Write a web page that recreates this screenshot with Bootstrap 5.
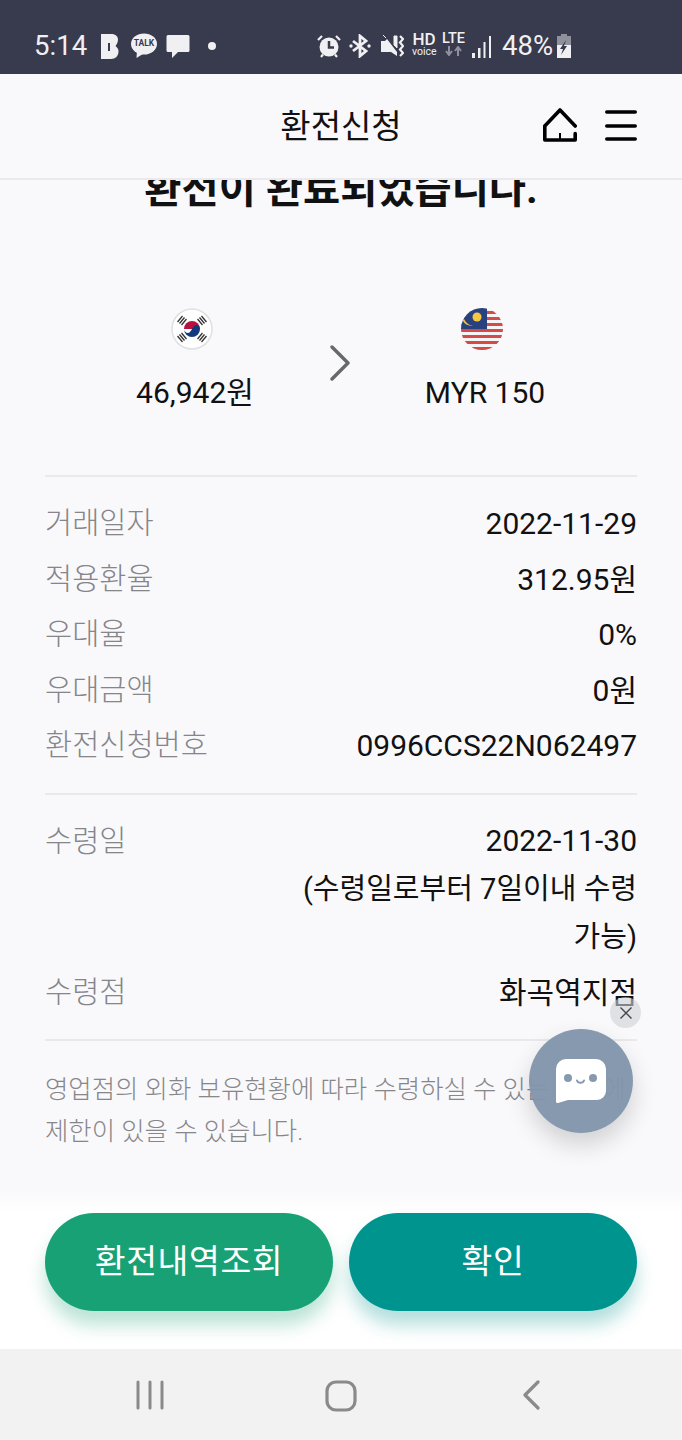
<!DOCTYPE html>
<html lang="ko">
<head>
  <meta charset="UTF-8" />
  <meta name="viewport" content="width=device-width, initial-scale=1.0"/>
  <title>환전신청</title>
  <link href="https://cdn.jsdelivr.net/npm/bootstrap@5.3.3/dist/css/bootstrap.min.css" rel="stylesheet">
  <style>
    body {
      background-color: #f9f9fc;
      color: #111;
      font-family: Roboto, 'Noto Sans CJK KR', sans-serif;
    }

    .phone {
      width: 682px;
      height: 1440px;
      overflow: hidden;
      position: relative;
    }

    .status-bar {
      height: 74px;
      background-color: #383a4e;
      color: #f0f0f2;
      padding: 16px 0 0 34px;
      flex-shrink: 0;
    }

    .status-row { height: 60px; }
    .status-right { margin-left: 101px; }
    .status-time { font-size: 27.5px; line-height: 60px; width: 60px; height: 60px; letter-spacing: 0.1px; }
    .status-pct { font-size: 27.5px; line-height: 60px; margin-left: 10px; }
    .status-bar svg { display: block; flex-shrink: 0; }
    .b-ico { margin-left: 6px; }
    .talk-wrap { width: 26px; height: 26px; margin-left: 11px; }
    .talk-text { left: 0; right: 0; top: 5px; font-size: 8.5px; line-height: 11px; font-weight: 700; color: #383a4e; }
    .chat-ico { margin-left: 9px; }
    .dot-ico { margin-left: 18px; }
    .mute-ico { margin-left: 9px; }
    .hd-wrap { margin-left: 8px; width: 24px; margin-top: -4px; }
    .hd-big { font-size: 17px; line-height: 15px; font-weight: 500; text-align: center; }
    .hd-small { font-size: 10.5px; line-height: 9px; text-align: center; }
    .lte-wrap { margin-left: 5px; width: 25px; margin-top: -4px; }
    .lte-big { font-size: 14.5px; line-height: 14px; font-weight: 500; text-align: center; }
    .signal-ico { margin-left: 6px; }
    .batt-ico { margin-left: 3px; }

    .top-header {
      height: 106px;
      background-color: #f9f9fc;
      border-bottom: 2px solid #eaeaee;
      flex-shrink: 0;
      position: relative;
      z-index: 2;
    }

    .top-title {
      font-size: 33px;
      line-height: 106px;
      text-align: center;
    }

    .top-icons {
      position: absolute;
      top: 34px;
      left: 543px;
    }

    .menu-ico { margin: 1px 0 0 28px; }

    .body-area {
      height: 1010px;
      overflow: hidden;
      padding: 0 45px;
      flex-shrink: 0;
    }

    .done-title {
      font-size: 40.4px;
      font-weight: 700;
      line-height: 44px;
      text-align: center;
      margin: -12px 0 0;
    }

    .swap-box {
      height: 265px;
      border-bottom: 2px solid #e9e9ec;
      padding-top: 96px;
    }

    .swap-side { flex-shrink: 0; text-align: center; font-size: 30px; line-height: 40px; }
    .swap-side svg { display: block; margin: 0 auto 23px; transform: translateX(-3px); }
    .swap-left { width: 250px; margin-left: 25px; }
    .swap-right { width: 200px; }
    .swap-arrow { width: 65px; padding-top: 37px; flex-shrink: 0; }
    .swap-arrow svg { display: block; margin-left: 9px; }

    .info-block { border-bottom: 2px solid #e9e9ec; }
    .info-first { padding: 19px 0 19px; }
    .info-second { padding: 22px 0 19px; }

    .info-row {
      font-size: 30px;
      line-height: 55.5px;
      display: flex;
      justify-content: space-between;
    }

    .info-row.tall-value { margin-bottom: 4px; }
    .tall-value .info-label { line-height: 48px; }
    .info-label { color: #85858a; flex-shrink: 0; font-size: 29.5px; font-weight: 300; }
    .info-value { text-align: right; width: 340px; line-height: 48px; }
    .kr-tight { font-size: 29px; }

    .guide-text {
      font-size: 25.4px;
      font-weight: 300;
      line-height: 42px;
      color: #87878a;
      margin: 27px 0 0;
    }

    .btn-area {
      height: 159px;
      padding: 23px 45px 0;
      background: linear-gradient(#f9f9fc, #fff 22px);
      flex-shrink: 0;
    }

    .pill-btn {
      width: 288px;
      height: 98px;
      border: none;
      border-radius: 49px;
      color: #fff;
      font-size: 33.5px;
      letter-spacing: 0.6px;
    }

    .pill-green { background-color: #19a176; box-shadow: 0 14px 18px rgba(25, 161, 118, 0.3); }
    .pill-green:hover { background-color: #19a176; color: #fff; }
    .pill-teal { background-color: #00948f; box-shadow: 0 14px 18px rgba(0, 148, 143, 0.3); }
    .pill-teal:hover { background-color: #00948f; color: #fff; }

    .nav-bar {
      height: 91px;
      background-color: #f2f2f2;
      flex-shrink: 0;
      position: relative;
    }

    .nav-bar svg { position: absolute; top: 31px; }
    .nav-recent { left: 135px; }
    .nav-home { left: 325px; }
    .nav-back { left: 522px; }

    /* floating chat button sits over the content */
    .chat-fab {
      position: absolute;
      left: 529px;
      top: 1029px;
      width: 104px;
      height: 104px;
      border-radius: 50%;
      background-color: rgba(130, 149, 171, 0.96);
      box-shadow: 0 12px 24px rgba(0, 0, 0, 0.16);
      z-index: 4;
    }

    .chat-close {
      position: absolute;
      left: 610px;
      top: 997px;
      width: 31px;
      height: 31px;
      border-radius: 50%;
      background-color: rgba(205, 208, 214, 0.6);
      z-index: 3;
    }
  </style>
</head>
<body class="m-0">
  <div class="phone d-flex flex-column">

    <div class="status-bar d-flex align-items-start">
      <div class="status-time">5:14</div>
      <div class="status-row d-flex align-items-center">
        <svg width="20" height="25" viewBox="0 0 20 25" class="b-ico"><path fill="#f0f0f2" d="M1 0h10c5 0 7 2.500 7 5.500 0 2.500-1 4.500-2.500 6.500 2 1.500 3 3 3 5.500 0 4.500-3 7.500-7.500 7.500H1z"/><rect x="8" y="9" width="2" height="8" fill="#383a4e"/></svg>
        <div class="talk-wrap position-relative">
          <svg width="26" height="26" viewBox="0 0 26 26"><ellipse cx="13" cy="11" rx="13" ry="10.500" fill="#f0f0f2"/><path fill="#f0f0f2" d="M6 17l-.5 8 8-5z"/></svg>
          <span class="talk-text position-absolute text-center">TALK</span>
        </div>
        <svg width="24" height="25" viewBox="0 0 24 25" class="chat-ico"><path fill="#f0f0f2" d="M2 1h20a1.500 1.500 0 0 1 1.500 1.500v14a1.500 1.500 0 0 1-1.500 1.500H12l-6 6v-6H2a1.500 1.500 0 0 1-1.500-1.500v-14A1.500 1.500 0 0 1 2 1z"/></svg>
        <svg width="8" height="8" viewBox="0 0 8 8" class="dot-ico"><circle cx="4" cy="4" r="4" fill="#f0f0f2"/></svg>
      </div>
      <div class="status-right status-row d-flex align-items-center">
        <!-- alarm -->
        <svg width="24" height="24" viewBox="0 0 24 24"><circle cx="12" cy="13" r="9.500" fill="#f0f0f2"/><path d="M12 7v6.500h5" fill="none" stroke="#383a4e" stroke-width="2.500"/><path d="M1 6l4-4M23 6l-4-4M4 23l2-2.500M20 23l-2-2.500" stroke="#f0f0f2" stroke-width="2.200"/></svg>
        <!-- bluetooth -->
        <svg width="22" height="24" viewBox="0 0 22 24" class="ms-2"><path d="M4 7l13 10-6 5V2l6 5L4 17" fill="none" stroke="#f0f0f2" stroke-width="2.800"/><circle cx="2" cy="12" r="1.700" fill="#f0f0f2"/><circle cx="20" cy="12" r="1.700" fill="#f0f0f2"/></svg>
        <!-- muted -->
        <svg width="24" height="24" viewBox="0 0 24 24" class="mute-ico"><path fill="#f0f0f2" d="M1 7h4l2-2 10 13v4l-6-4H1z"/><path d="M3 1l3 3M14 2v9l3 3V2z" fill="#f0f0f2" stroke="#f0f0f2"/><path d="M20 2l3 3-3 3.500 3 3.500-3 3.500 3 3.500-3 3" fill="none" stroke="#f0f0f2" stroke-width="2.200"/></svg>
        <div class="hd-wrap">
          <div class="hd-big">HD</div>
          <div class="hd-small">voice</div>
        </div>
        <div class="lte-wrap">
          <div class="lte-big">LTE</div>
          <svg width="17" height="10" viewBox="0 0 17 10" class="mx-auto mt-0"><path d="M4 0v8M1 5l3 4 3-4" fill="none" stroke="#8e909b" stroke-width="2"/><path d="M13 10V2M10 5l3-4 3 4" fill="none" stroke="#8e909b" stroke-width="2"/></svg>
        </div>
        <svg width="20" height="23" viewBox="0 0 20 23" class="signal-ico"><g fill="#f0f0f2"><rect x="0" y="18" width="3" height="5"/><rect x="6" y="13" width="2.500" height="10"/><rect x="11.500" y="7" width="2" height="16"/><rect x="17" y="1" width="2" height="22"/></g></svg>
        <div class="status-pct">48%</div>
        <svg width="16" height="24" viewBox="0 0 16 24" class="batt-ico"><path fill="#8e909b" d="M5 0h6v2h4v10H1V2h4z"/><path fill="#f0f0f2" d="M1 11h14v13H1z"/><path fill="#383a4e" d="M10 6l-6 9h3l-2 6 6-9H8z"/></svg>
      </div>
    </div>

    <header class="top-header">
      <div class="top-title">환전신청</div>
      <div class="top-icons d-flex align-items-start">
        <svg width="34" height="34" viewBox="0 0 34 34"><path d="M1.800 18 17 2l15.200 16M1.800 18v14h30.400v-6.500" fill="none" stroke="#000" stroke-width="3.600" stroke-linejoin="round" stroke-linecap="round"/><path d="M17 25v7" stroke="#000" stroke-width="2"/></svg>
        <svg width="32" height="32" viewBox="0 0 32 32" class="menu-ico"><path d="M1.800 3h28.400M1.800 17h28.400M1.800 30h28.400" stroke="#000" stroke-width="3.600" stroke-linecap="round"/></svg>
      </div>
    </header>

    <main class="body-area">
      <h1 class="done-title">환전이 완료되었습니다.</h1>

      <div class="swap-box d-flex align-items-start">
        <div class="swap-side swap-left">
          <svg width="42" height="42" viewBox="0 0 42 42">
            <circle cx="21" cy="21" r="20" fill="#fff" stroke="#dfe0e3" stroke-width="1.500"/>
            <path d="M13 21a8 8 0 0 1 16 0z" fill="#b8123f"/>
            <path d="M13 21a8 8 0 0 0 16 0c0-2-2-4-4-4s-4 4-4 4-2 4-4 4-4-2-4-4z" fill="#113a7d"/>
            <g stroke="#333" stroke-width="1.300">
              <path d="M8 14l5-6M10 15.500l5-6M12 17l5-6" transform="translate(-1.500 0)"/>
              <path d="M29 8l5 6M27 9.500l5 6M25 11l5 6" transform="translate(1.500 0)"/>
              <path d="M8 28l5 6M10 26.500l5 6M12 25l5 6" transform="translate(-1.500 0)"/>
              <path d="M30 25l-5 6M32 26.500l-5 6M34 28l-5 6" transform="translate(1.500 0)"/>
            </g>
          </svg>
          46,942원
        </div>
        <div class="swap-arrow">
          <svg width="22" height="36" viewBox="0 0 22 36"><path d="M3 2l16 16L3 34" fill="none" stroke="#66686c" stroke-width="3.400" stroke-linecap="round" stroke-linejoin="round"/></svg>
        </div>
        <div class="swap-side swap-right">
          <svg width="42" height="42" viewBox="0 0 42 42">
            <defs><clipPath id="myr-clip"><circle cx="21" cy="21" r="21"/></clipPath></defs>
            <g clip-path="url(#myr-clip)">
              <rect width="42" height="42" fill="#f4f4f6"/>
              <path fill="#d44a45" d="M0 3h42v3H0zM0 9h42v3H0zM0 15h42v3H0zM0 21h42v3H0zM0 27h42v3H0zM0 33h42v3H0zM0 39h42v3H0z"/>
              <rect width="26" height="21" fill="#27427f"/>
              <circle cx="16" cy="9" r="4.500" fill="#f4c842"/>
              <path d="M1 11c2 5 6 7 11 7-4-.5-7-3-9-7z" fill="#f4c842"/>
            </g>
          </svg>
          MYR 150
        </div>
      </div>

      <section class="info-block info-first">
        <div class="info-row"><span class="info-label">거래일자</span><span>2022-11-29</span></div>
        <div class="info-row"><span class="info-label">적용환율</span><span>312.95원</span></div>
        <div class="info-row"><span class="info-label">우대율</span><span>0%</span></div>
        <div class="info-row"><span class="info-label">우대금액</span><span>0원</span></div>
        <div class="info-row"><span class="info-label">환전신청번호</span><span>0996CCS22N062497</span></div>
      </section>

      <section class="info-block info-second">
        <div class="info-row tall-value"><span class="info-label">수령일</span><span class="info-value">2022-11-30<br><span class="kr-tight">(수령일로부터 7일이내 수령 가능)</span></span></div>
        <div class="info-row"><span class="info-label">수령점</span><span>화곡역지점</span></div>
      </section>

      <p class="guide-text">영업점의 외화 보유현황에 따라 수령하실 수 있는 금종에 제한이 있을 수 있습니다.</p>
    </main>

    <div class="btn-area d-flex gap-3">
      <button type="button" class="btn pill-btn pill-green">환전내역조회</button>
      <button type="button" class="btn pill-btn pill-teal">확인</button>
    </div>

    <nav class="nav-bar">
      <svg class="nav-recent" width="30" height="30" viewBox="0 0 30 30"><path d="M3 2v26M15 2v26M27 2v26" stroke="#8a8a8a" stroke-width="3" stroke-linecap="round"/></svg>
      <svg class="nav-home" width="32" height="32" viewBox="0 0 32 32"><rect x="2" y="2" width="28" height="28" rx="9" fill="none" stroke="#8a8a8a" stroke-width="3.200"/></svg>
      <svg class="nav-back" width="20" height="30" viewBox="0 0 20 30"><path d="M16 2 3 15l13 13" fill="none" stroke="#8a8a8a" stroke-width="3.200" stroke-linecap="round" stroke-linejoin="round"/></svg>
    </nav>

    <div class="chat-close d-flex align-items-center justify-content-center">
      <svg width="14" height="14" viewBox="0 0 14 14"><path d="M1.500 1.500l11 11M12.500 1.500l-11 11" stroke="#444" stroke-width="1.400"/></svg>
    </div>
    <div class="chat-fab d-flex align-items-center justify-content-center">
      <svg width="50" height="44" viewBox="0 0 50 44"><path fill="#fff" d="M10 0h30a10 10 0 0 1 10 10v22a9 9 0 0 1-9 9H12L2 44c-1 .3-2-.3-2-1.500V10A10 10 0 0 1 10 0z"/><circle cx="12" cy="19" r="4" fill="#8699ae"/><circle cx="37" cy="19" r="4" fill="#8699ae"/><path d="M21 21.500c1 3 6 3 7 0" fill="none" stroke="#8699ae" stroke-width="2" stroke-linecap="round"/></svg>
    </div>
  </div>

  <script src="https://cdn.jsdelivr.net/npm/bootstrap@5.3.3/dist/js/bootstrap.bundle.min.js"></script>
</body>
</html>
